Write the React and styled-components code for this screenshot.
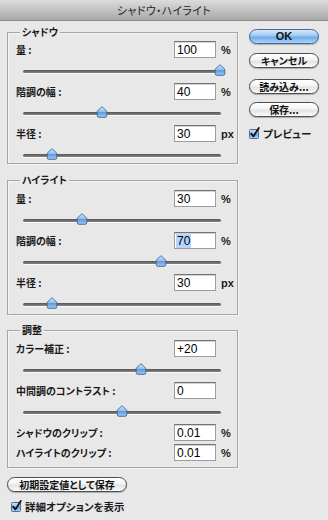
import React from 'react';
import styled, { createGlobalStyle } from 'styled-components';

const Global = createGlobalStyle`
  html, body { margin: 0; padding: 0; background: #e8e8e8; }
  body { width: 328px; height: 520px; overflow: hidden; font-family: "Noto Sans CJK JP", sans-serif; }
  * { box-sizing: border-box; }
`;

const Window = styled.div`
  width: 328px;
  height: 520px;
  background: #e8e8e8;
  display: flex;
  flex-direction: column;
`;

const TitleBar = styled.div`
  flex: none;
  height: 21px;
  background: linear-gradient(#dcdcdc, #bdbdbd 60%, #a9a9a9);
  border-bottom: 1px solid #8e8e8e;
  display: flex;
  align-items: center;
  justify-content: center;
  font-family: "Noto Sans CJK JP", sans-serif;
  font-feature-settings: "palt";
  font-size: 11px;
  color: #262626;
  letter-spacing: 0.3px;
`;

const Body = styled.div`
  display: flex;
  padding-left: 7px;
  gap: 11px;
`;

const LeftCol = styled.div`
  width: 231px;
  display: flex;
  flex-direction: column;
`;

const RightCol = styled.div`
  width: 70px;
  display: flex;
  flex-direction: column;
  padding-top: 8px;
`;

const Group = styled.div`
  position: relative;
  margin-top: ${p => p.$mt}px;
  border: 1px solid #a4a4a4;
  box-shadow: inset 1px 1px 0 #f5f5f5, 1px 1px 0 #f5f5f5;
  padding: ${p => p.$pt}px 0 ${p => p.$pb}px 8px;
  display: flex;
  flex-direction: column;
`;

const Legend = styled.span`
  position: absolute;
  top: -8px;
  left: 12px;
  padding: 0 2px;
  background: #e8e8e8;
  font-weight: bold;
  font-size: 10px;
  line-height: 13px;
  font-feature-settings: "palt";
  color: #1a1a1a;
`;

const Pair = styled.div`
  display: flex;
  flex-direction: column;
  margin-top: ${p => p.$mt || 0}px;
`;

const FieldRow = styled.div`
  display: grid;
  grid-template-columns: 154px 42px 20px;
  column-gap: 4px;
  align-items: center;
  height: 17px;
  margin-top: ${p => p.$mt || 0}px;
`;

const Label = styled.span`
  font-weight: bold;
  font-size: 10px;
  font-feature-settings: "palt";
  color: #1a1a1a;
  white-space: nowrap;
`;

const InputBox = styled.div`
  height: 17px;
  background: #fff;
  border: 1px solid #9c9c9c;
  border-top-color: #727272;
  box-shadow: inset 0 1px 0 #d4d4d4;
  padding-left: 2px;
  display: flex;
  align-items: center;
  font-family: "Liberation Sans", Arial, sans-serif;
  font-size: 12px;
  color: #000;
`;

const Selected = styled.span`
  background: #b5d5ff;
  padding: 0 1px;
  margin-left: -1px;
`;

const Unit = styled.span`
  font-family: "Liberation Sans", Arial, sans-serif;
  font-weight: bold;
  font-size: 11px;
  color: #1a1a1a;
  padding-left: 1px;
`;

const Slider = styled.div`
  position: relative;
  height: 20px;
`;

const Track = styled.div`
  margin: 12px 0 0 7px;
  width: 198px;
  height: 3px;
  border-radius: 2px;
  background: linear-gradient(#555555, #858585);
  box-shadow: 0 1px 0 #fafafa;
`;

const ThumbWrap = styled.div`
  position: absolute;
  top: 6px;
  width: 12px;
  height: 12px;
  display: flex;
`;

const Button = styled.button`
  width: ${p => p.$w || 70}px;
  height: 15px;
  margin-top: ${p => p.$mt || 0}px;
  padding: 0;
  border-radius: 8px;
  border: 1px solid ${p => (p.$primary ? '#4a6690' : '#4d4d4d')};
  background: ${p =>
    p.$primary
      ? 'linear-gradient(#d5e8fb, #9cc8f2 45%, #6ea9e8 55%, #a8d6fb)'
      : 'linear-gradient(#ffffff, #f4f4f4 45%, #e2e2e2 55%, #fbfbfb)'};
  box-shadow: 0 1px 1px rgba(0, 0, 0, 0.25);
  display: flex;
  align-items: center;
  justify-content: center;
  font-family: ${p => (p.$latin ? '"Liberation Sans", Arial, sans-serif' : '"Noto Sans CJK JP", sans-serif')};
  font-feature-settings: "palt";
  font-weight: bold;
  font-size: ${p => (p.$latin ? 11 : 10)}px;
  color: #111;
  line-height: 1;
`;

const CheckRow = styled.div`
  display: flex;
  align-items: center;
  gap: 3px;
  margin-top: ${p => p.$mt || 0}px;
  padding-left: ${p => p.$pl || 0}px;
  height: 14px;
`;

const CheckLabel = styled.span`
  font-weight: bold;
  font-size: ${p => p.$size || 10}px;
  font-feature-settings: "palt";
  color: #1a1a1a;
`;

function Thumb({ frac }) {
  const left = 23 - 16 + frac * 197 - 6;
  return (
    <ThumbWrap style={{ left }}>
      <svg width="12" height="12" viewBox="0 0 12 12">
        <defs>
          <linearGradient id="tg" x1="0" y1="0" x2="0" y2="1">
            <stop offset="0" stopColor="#dbeafb" />
            <stop offset="0.5" stopColor="#8ebcec" />
            <stop offset="0.55" stopColor="#5d9ae0" />
            <stop offset="1" stopColor="#9fcdf6" />
          </linearGradient>
        </defs>
        <path d="M6 0.7 L10.8 5.2 L10.8 9.6 Q10.8 11.3 9.1 11.3 L2.9 11.3 Q1.2 11.3 1.2 9.6 L1.2 5.2 Z" fill="url(#tg)" stroke="#41648f" strokeWidth="0.9" />
      </svg>
    </ThumbWrap>
  );
}

function CheckIcon() {
  return (
    <svg width="11" height="12" viewBox="0 0 11 12">
      <defs>
        <linearGradient id="cg" x1="0" y1="0" x2="0" y2="1">
          <stop offset="0" stopColor="#cfe4fa" />
          <stop offset="0.5" stopColor="#8dbdee" />
          <stop offset="0.55" stopColor="#6aa5e6" />
          <stop offset="1" stopColor="#b3dcfb" />
        </linearGradient>
      </defs>
      <rect x="0.5" y="2.5" width="9" height="9" rx="1" fill="url(#cg)" stroke="#4d6c96" />
      <path d="M2.2 6.6 L4.4 9.4 L9.8 1" fill="none" stroke="#111" strokeWidth="1.8" strokeLinecap="round" strokeLinejoin="round" />
    </svg>
  );
}

function Field({ label, value, unit, selected, mt }) {
  return (
    <FieldRow $mt={mt}>
      <Label>{label}</Label>
      <InputBox>{selected ? <Selected>{value}</Selected> : value}</InputBox>
      <Unit>{unit}</Unit>
    </FieldRow>
  );
}

function SliderField({ label, value, unit, frac, selected, mt }) {
  return (
    <Pair $mt={mt}>
      <Field label={label} value={value} unit={unit} selected={selected} />
      <Slider>
        <Track />
        <Thumb frac={frac} />
      </Slider>
    </Pair>
  );
}

export default function App() {
  return (
    <Window>
      <Global />
      <TitleBar>シャドウ・ハイライト</TitleBar>
      <Body>
        <LeftCol>
          <Group $mt={11} $pt={8} $pb={1}>
            <Legend>シャドウ</Legend>
            <SliderField label="量 :" value="100" unit="%" frac={1} />
            <SliderField label="階調の幅 :" value="40" unit="%" frac={0.4} mt={5} />
            <SliderField label="半径 :" value="30" unit="px" frac={0.147} mt={5} />
          </Group>
          <Group $mt={16} $pt={9} $pb={3}>
            <Legend>ハイライト</Legend>
            <SliderField label="量 :" value="30" unit="%" frac={0.3} />
            <SliderField label="階調の幅 :" value="70" unit="%" frac={0.7} selected mt={5} />
            <SliderField label="半径 :" value="30" unit="px" frac={0.147} mt={5} />
          </Group>
          <Group $mt={15} $pt={9} $pb={6}>
            <Legend>調整</Legend>
            <SliderField label="カラー補正 :" value="+20" unit="" frac={0.6} />
            <SliderField label="中間調のコントラスト :" value="0" unit="" frac={0.505} mt={5} />
            <Field label="シャドウのクリップ :" value="0.01" unit="%" mt={5} />
            <Field label="ハイライトのクリップ :" value="0.01" unit="%" mt={3} />
          </Group>
          <Button $w={120} $mt={9}>初期設定値として保存</Button>
          <CheckRow $mt={7} $pl={4}>
            <CheckIcon />
            <CheckLabel $size={10.5}>詳細オプションを表示</CheckLabel>
          </CheckRow>
        </LeftCol>
        <RightCol>
          <Button $primary $latin>OK</Button>
          <Button $mt={9}>キャンセル</Button>
          <Button $mt={11}>読み込み...</Button>
          <Button $mt={8}>保存...</Button>
          <CheckRow $mt={9}>
            <CheckIcon />
            <CheckLabel $size={10.5}>プレビュー</CheckLabel>
          </CheckRow>
        </RightCol>
      </Body>
    </Window>
  );
}
